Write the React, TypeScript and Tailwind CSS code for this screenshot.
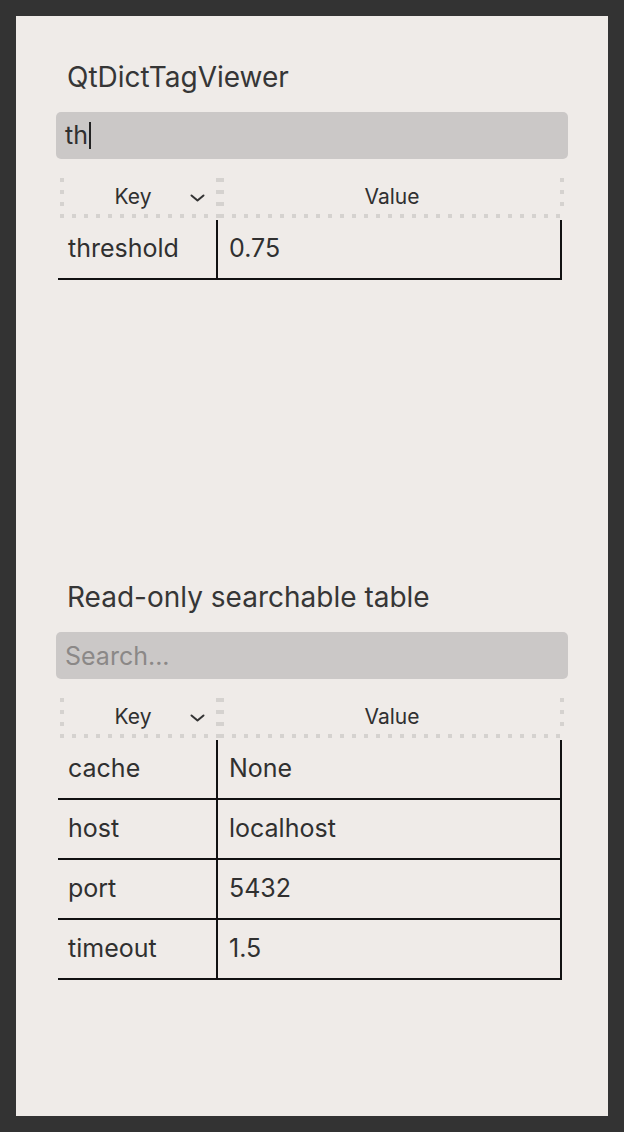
import React from "react";

type Row = { key: string; value: string };

const font = { fontFamily: "Inter, 'Noto Sans', 'Liberation Sans', sans-serif" };

// dotted rule used by the header cells (4px dots, 12px pitch)
function HDots() {
  return (
    <div className="h-[4px] w-full bg-[repeating-linear-gradient(to_right,#d5d2cf_0px,#d5d2cf_4px,transparent_4px,transparent_12px)]" />
  );
}

function VDots() {
  return (
    <div className="w-[4px] h-full shrink-0 bg-[repeating-linear-gradient(to_bottom,#d5d2cf_0px,#d5d2cf_4px,transparent_4px,transparent_12px)]" />
  );
}

function Chevron() {
  return (
    <svg width="15" height="8" viewBox="0 0 15 8" fill="none" aria-hidden="true">
      <path d="M1.5 1.5L7.5 6.5L13.5 1.5" stroke="#333" strokeWidth="2" strokeLinecap="round" strokeLinejoin="round" />
    </svg>
  );
}

function Header() {
  return (
    <div className="flex w-[504px] ml-[4px] mt-[19px]">
      <div className="flex flex-col w-[160px]">
        <div className="flex h-[36px]">
          <VDots />
          <div className="flex flex-1 items-center">
            <span className="flex-1 pl-[12px] text-center text-[21px] leading-none text-[#303030]">Key</span>
            <span className="mr-[11px] mt-[4px] flex">
              <Chevron />
            </span>
          </div>
          <VDots />
        </div>
        <HDots />
      </div>
      <div className="flex flex-col w-[344px]">
        <div className="flex h-[36px]">
          <VDots />
          <div className="flex flex-1 items-center justify-center text-[21px] leading-none text-[#303030]">Value</div>
          <VDots />
        </div>
        <HDots />
      </div>
    </div>
  );
}

function Table({ rows }: { rows: Row[] }) {
  return (
    <div className="ml-[2px] mt-[2px] w-[504px]">
      {rows.map((r) => (
        <div key={r.key} className="flex h-[60px] border-b-2 border-[#111]">
          <div className="flex w-[160px] items-center border-r-2 border-[#111] pl-[10px] text-[25px] text-[#303030]">
            {r.key}
          </div>
          <div className="flex w-[344px] items-center border-r-2 border-[#111] pl-[11px] text-[25px] text-[#303030]">
            {r.value}
          </div>
        </div>
      ))}
    </div>
  );
}

function Section({
  title,
  children,
  rows,
}: {
  title: string;
  children: React.ReactNode;
  rows: Row[];
}) {
  return (
    <section className="h-[520px] flex flex-col">
      <h1 className="h-[32px] pl-[11px] text-[28px] leading-[32px] text-[#363636]">{title}</h1>
      {children}
      <Header />
      <Table rows={rows} />
    </section>
  );
}

export default function App() {
  const allRows: Row[] = [
    { key: "cache", value: "None" },
    { key: "host", value: "localhost" },
    { key: "port", value: "5432" },
    { key: "timeout", value: "1.5" },
  ];

  return (
    <div className="w-[624px] h-[1132px] bg-[#333333] p-[16px]" style={font}>
      <div className="h-[1100px] bg-[#efebe8] px-[40px] pt-[45px]">
        <Section title="QtDictTagViewer" rows={[{ key: "threshold", value: "0.75" }]}>
          {/* filter box with caret */}
          <div className="mt-[19px] flex h-[47px] items-center rounded-[5px] bg-[#cbc8c7] pl-[9px] text-[25px] text-[#303030]">
            <span>th</span>
            <span className="ml-[1px] h-[27px] w-[2px] bg-[#222]" />
          </div>
        </Section>
        <Section title="Read-only searchable table" rows={allRows}>
          <input
            readOnly
            placeholder="Search..."
            className="mt-[19px] h-[47px] w-full rounded-[5px] bg-[#cbc8c7] pl-[9px] text-[25px] text-[#303030] outline-none placeholder:text-[#8b8887]"
          />
        </Section>
      </div>
    </div>
  );
}
